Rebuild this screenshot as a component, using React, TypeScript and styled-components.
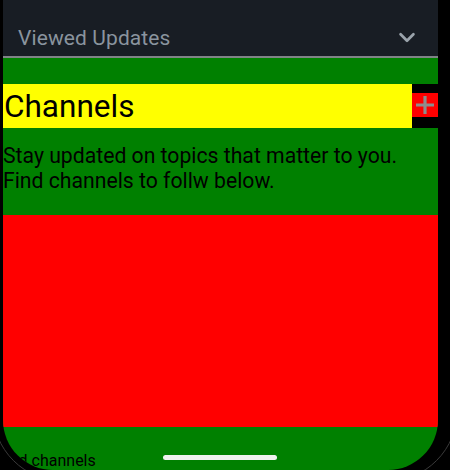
import React from "react";
import styled, { createGlobalStyle } from "styled-components";

const Global = createGlobalStyle`
  html, body { margin: 0; padding: 0; background: #000; }
  body { font-family: Roboto, "Noto Sans", Arial, sans-serif; }
  * { box-sizing: border-box; }
`;

const Device = styled.div`
  position: relative;
  width: 450px;
  height: 470px;
  background: #000;
  padding-left: 3px;
  overflow: hidden;
`;

const Screen = styled.div`
  position: relative;
  width: 435px;
  height: 470px;
  background: #008000;
  border-bottom-left-radius: 50px;
  border-bottom-right-radius: 50px;
  overflow: hidden;
  display: flex;
  flex-direction: column;
`;

const Header = styled.div`
  height: 58px;
  flex: none;
  background: #181d24;
  border-bottom: 2px solid #808487;
  display: flex;
  align-items: center;
  justify-content: space-between;
  padding: 20px 20px 0 15px;
`;

const HeaderTitle = styled.span`
  color: #8a949e;
  font-size: 21px;
  letter-spacing: 0.1px;
`;

const Chevron = styled.svg`
  margin-top: -2px;
`;

const Spacer = styled.div`
  height: 26px;
  flex: none;
`;

const TitleRow = styled.div`
  display: flex;
  height: 44px;
  flex: none;
`;

const Title = styled.h1`
  margin: 0;
  flex: 1;
  background: #ffff00;
  color: #000;
  font-weight: 400;
  font-size: 31.5px;
  line-height: 46px;
  padding-left: 1px;
`;

const AddCell = styled.div`
  width: 26px;
  background: #000;
  display: flex;
  align-items: center;
`;

const AddButton = styled.button`
  width: 26px;
  height: 24px;
  margin-top: -2px;
  padding: 0;
  border: none;
  background: #ff0000;
  display: flex;
  align-items: center;
  justify-content: center;
`;

const Description = styled.p`
  margin: 0;
  height: 87px;
  flex: none;
  padding-top: 15px;
  font-size: 21.2px;
  line-height: 25px;
  color: #000;
`;

const List = styled.div`
  height: 212px;
  flex: none;
  background: #ff0000;
`;

const Footer = styled.div`
  flex: 1;
  font-size: 16px;
  color: #000;
  padding-top: 24px;
  text-indent: -6px;
`;

const HomeIndicator = styled.div`
  position: absolute;
  left: 160px;
  top: 455px;
  width: 114px;
  height: 5px;
  border-radius: 3px;
  background: #eef2ee;
`;

const FrameEdge = styled.div`
  position: absolute;
  left: -8px;
  top: -60px;
  width: 466px;
  height: 542px;
  border-radius: 72px;
  border: 1px solid #3a3a3a;
  pointer-events: none;
`;

export default function App() {
  return (
    <>
      <Global />
      <Device>
        <FrameEdge />
        <Screen>
          <Header>
            <HeaderTitle>Viewed Updates</HeaderTitle>
            <Chevron width="22" height="22" viewBox="0 0 24 24" fill="none" stroke="#9aa3ab" strokeWidth="3" strokeLinecap="round" strokeLinejoin="round">
              <path d="M5 9l7 7 7-7" />
            </Chevron>
          </Header>
          <Spacer />
          <TitleRow>
            <Title>Channels</Title>
            <AddCell>
              <AddButton aria-label="Add channel">
                <svg width="22" height="22" viewBox="0 0 22 22">
                  <path d="M11 2v18M2 11h18" stroke="#8d8d8d" strokeWidth="3.2" />
                </svg>
              </AddButton>
            </AddCell>
          </TitleRow>
          <Description>
            Stay updated on topics that matter to you.
            <br />
            Find channels to follw below.
          </Description>
          <List />
          <Footer>Find channels</Footer>
          <HomeIndicator />
        </Screen>
      </Device>
    </>
  );
}
